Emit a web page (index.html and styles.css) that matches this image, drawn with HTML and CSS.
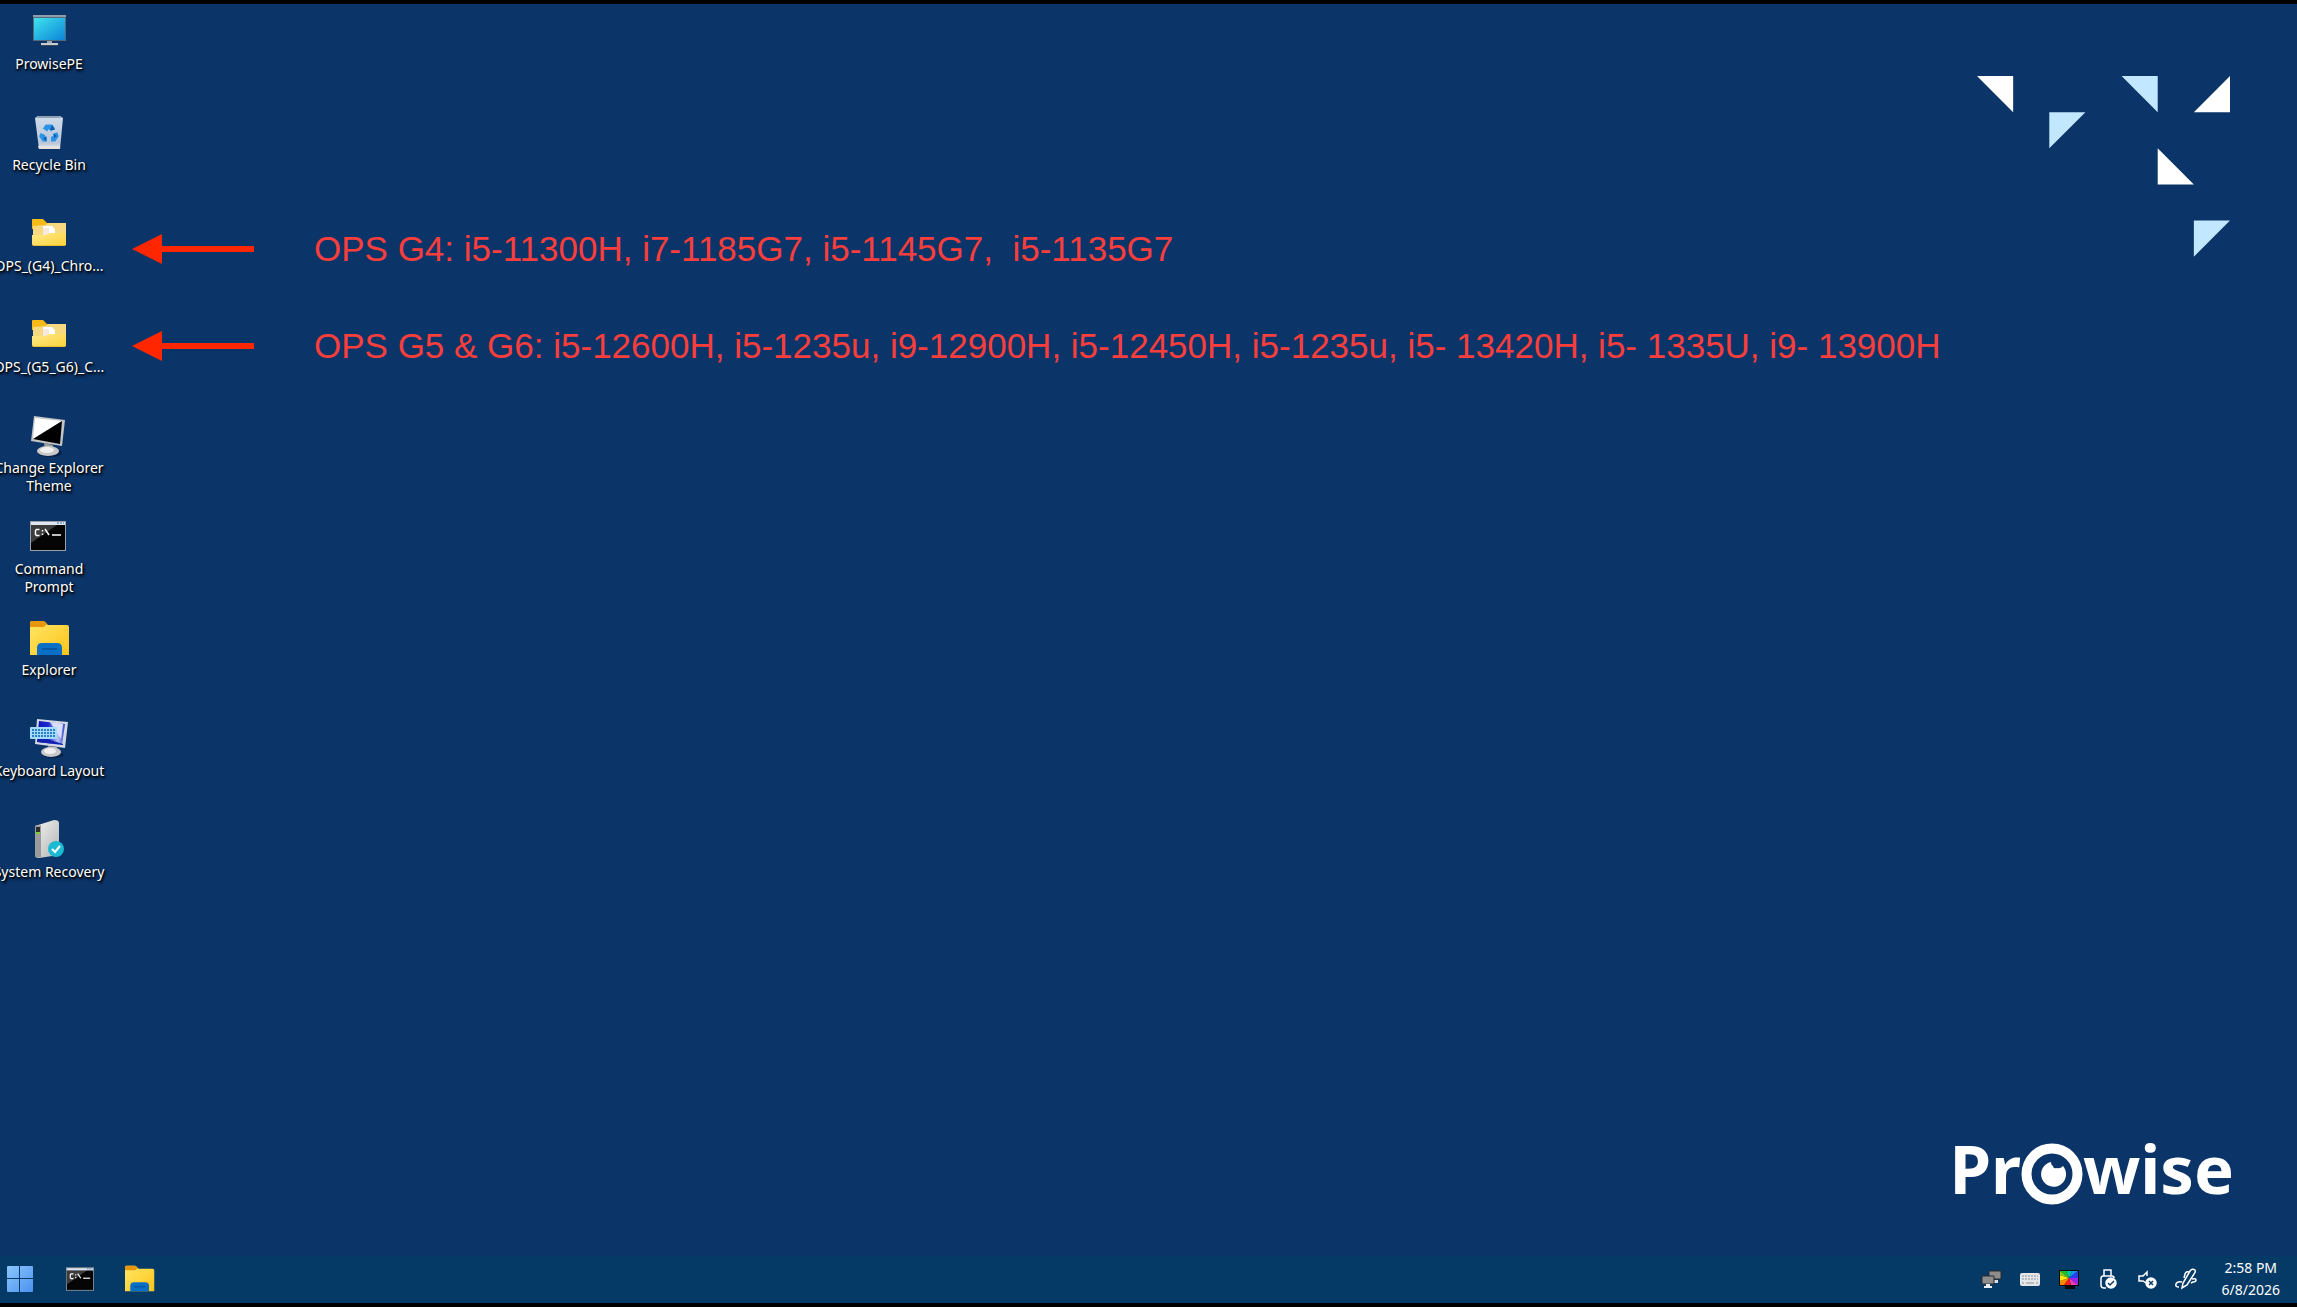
FILE: index.html
```html
<!DOCTYPE html>
<html lang="en">
<head>
    <meta charset="UTF-8">
    <meta name="viewport" content="width=device-width, initial-scale=1.0">
    <title>ProwisePE</title>
    <link rel="stylesheet" href="styles.css">
</head>
<body>
    <!-- shared gradients and icons -->
    <svg class="defs" width="0" height="0" aria-hidden="true">
        <defs>
            <linearGradient id="g-screen" x1="0" y1="0" x2="1" y2="1">
                <stop offset="0" stop-color="#3fe3ee"/>
                <stop offset="1" stop-color="#0b84d8"/>
            </linearGradient>
            <linearGradient id="g-bin" x1="0" y1="0" x2="0" y2="1">
                <stop offset="0" stop-color="#cfdcec"/>
                <stop offset=".8" stop-color="#b9c6d8"/>
                <stop offset="1" stop-color="#e2e4e6"/>
            </linearGradient>
            <linearGradient id="g-folder" x1="0" y1="0" x2="1" y2="1">
                <stop offset="0" stop-color="#ffe98a"/>
                <stop offset="1" stop-color="#fcd23a"/>
            </linearGradient>
            <linearGradient id="g-explorer" x1="0" y1="0" x2="1" y2="1">
                <stop offset="0" stop-color="#ffe768"/>
                <stop offset="1" stop-color="#fcc419"/>
            </linearGradient>
            <linearGradient id="g-start" x1="0" y1="0" x2="1" y2="1">
                <stop offset="0" stop-color="#8cc6fb"/>
                <stop offset="1" stop-color="#4a92f0"/>
            </linearGradient>
            <linearGradient id="g-blue" x1="0" y1="0" x2="1" y2="0">
                <stop offset="0" stop-color="#0a12b8"/>
                <stop offset=".4" stop-color="#1a2ad0"/>
                <stop offset=".75" stop-color="#b9c4f6"/>
                <stop offset="1" stop-color="#2a3cc8"/>
            </linearGradient>
            <linearGradient id="g-drive" x1="0" y1="0" x2="1" y2="1">
                <stop offset="0" stop-color="#f2f2f2"/>
                <stop offset="1" stop-color="#b4b4b4"/>
            </linearGradient>
            <symbol id="i-folder" viewBox="0 0 42 42">
                <path d="M4 6q0-1 1-1h10l4 4h18q1 0 1 1v5H4z" fill="#f9b916"/>
                <path d="M5 12l12-1 3-2h18v22H5z" fill="#f6d980"/>
                <path d="M15 12h9l3 3v9H15z" fill="#fff"/>
                <path d="M15 14h6v8h-6z" fill="#f7e8e0"/>
                <path d="M4 21h13l5-2h16v11q0 2-2 2H6q-2 0-2-2z" fill="url(#g-folder)"/>
                <path d="M5 31.500h32" stroke="#e9bd2d"/>
            </symbol>
            <symbol id="i-cmd" viewBox="0 0 36 30">
                <rect x=".5" y=".5" width="35" height="29" fill="#050505" stroke="#9aa0a6"/>
                <path d="M1 4h26L1 22z" fill="#3c3c3c"/>
                <path d="M1 1h34v3H1z" fill="#dfe8f2"/>
                <path d="M27 2h2m1 0h2m1 0h1" stroke="#3a66a8"/>
                <path d="M9.500 8.500H6.500L5.500 9.500v4l1 1h3M12.500 9v1.500m0 2V14M15 8l4 6" stroke="#fff" stroke-width="1.500" fill="none"/>
                <path d="M22 14h9" stroke="#fff" stroke-width="1.500"/>
            </symbol>
            <symbol id="i-explorer" viewBox="0 0 40 36">
                <path d="M0 3q0-2 2-2h11q1 0 2 1l3 3h19q2 0 2 2v28H0z" fill="url(#g-explorer)"/>
                <path d="M0 3q0-2 2-2h11q1 0 2 1l2 2-2 2q-1 1-2 1H0z" fill="#e8960c"/>
                <path d="M7 35V28q0-5 5-5h15q5 0 5 5v7z" fill="#0a6fc6"/>
                <path d="M12 29h15" stroke="#07509a" stroke-width="1.500"/>
            </symbol>
        </defs>
    </svg>

    <main class="desktop">
        <nav class="icons" aria-label="Desktop">
            <a href="#" class="icon">
                <svg viewBox="0 0 42 42">
                    <rect x="5" y="3" width="33" height="26" fill="#55697a"/>
                    <path d="M5 4h33" stroke="#c9d2d8"/>
                    <rect x="6" y="6" width="31" height="22" fill="url(#g-screen)"/>
                    <path d="M19 29h5v3h-5z" fill="#9aa7b2"/>
                    <path d="M13 31h17v2H13z" fill="#c5ccd2"/>
                    <path d="M13 33h17v1H13z" fill="#3b4650"/>
                </svg>
                <span class="label">ProwisePE</span>
            </a>
            <a href="#" class="icon">
                <svg viewBox="0 0 42 42">
                    <path d="M7 5l3-2h22l3 2-3 31H11z" fill="url(#g-bin)"/>
                    <path d="M8 5l3-2h20l3 2z" fill="#8fa0b4"/>
                    <path d="M10 33h22l-1 3H11z" fill="#e6e3df"/>
                    <g fill="none" stroke="#2a93e6" stroke-width="5">
                        <path d="M17 17l2-3h4l2 3"/>
                        <path d="M27 20l1 3-2 3h-3"/>
                        <path d="M19 26h-3l-2-3 1-2"/>
                    </g>
                    <path d="M24 12l3 5h-5zM18 24v4l-3-3zM26 21l3 2-3 2z" fill="#0d5cae"/>
                </svg>
                <span class="label">Recycle Bin</span>
            </a>
            <a href="#" class="icon">
                <svg><use href="#i-folder"/></svg>
                <span class="label">OPS_(G4)_Chro...</span>
            </a>
            <a href="#" class="icon">
                <svg><use href="#i-folder"/></svg>
                <span class="label">OPS_(G5_G6)_C...</span>
            </a>
            <a href="#" class="icon">
                <svg viewBox="0 0 42 42">
                    <ellipse cx="22" cy="37" rx="12" ry="4" fill="#07224a"/>
                    <path d="M16 27l9 2-1 5h-7z" fill="#9c9c9c"/>
                    <ellipse cx="20" cy="35" rx="11" ry="5" fill="#c9c9c9"/>
                    <ellipse cx="19" cy="34" rx="7" ry="3" fill="#f0f0f0"/>
                    <path d="M6 0l31 4-3 26L3 25z" fill="#c2c4c6"/>
                    <path d="M7 2l27 3L5 23z" fill="#fff"/>
                    <path d="M34 5L5 23l27 5z" fill="#000"/>
                </svg>
                <span class="label">Change Explorer Theme</span>
            </a>
            <a href="#" class="icon">
                <svg viewBox="0 0 42 42"><use href="#i-cmd" x="2" y="4" width="36" height="30"/></svg>
                <span class="label">Command Prompt</span>
            </a>
            <a href="#" class="icon">
                <svg viewBox="0 0 42 42"><use href="#i-explorer" x="2" y="2" width="40" height="36"/></svg>
                <span class="label">Explorer</span>
            </a>
            <a href="#" class="icon">
                <svg viewBox="0 0 42 42">
                    <ellipse cx="25" cy="36" rx="11" ry="3" fill="#07224a"/>
                    <path d="M20 27l9 1-1 6h-7z" fill="#9c9c9c"/>
                    <ellipse cx="23" cy="33" rx="10" ry="5" fill="#c9c9c9"/>
                    <ellipse cx="22" cy="32" rx="6" ry="3" fill="#f0f0f0"/>
                    <path d="M9 0l31 3-3 26L7 25z" fill="#d3d8e2"/>
                    <path d="M11 2l26 3-3 21L9 23z" fill="url(#g-blue)"/>
                    <path d="M12 18l23 7v1L10 23z" fill="#1420b0"/>
                    <path d="M22 3l13 2-2 15z" fill="#d9defa"/>
                    <rect x="2" y="8" width="27" height="12" rx="1" fill="#a6dcfb"/>
                    <path d="M4 11h23M4 14h23M4 17h23" stroke="#2b7fc4" stroke-width="2" stroke-dasharray="2 1"/>
                </svg>
                <span class="label">Keyboard Layout</span>
            </a>
            <a href="#" class="icon">
                <svg viewBox="0 0 42 42">
                    <path d="M7 6L26 0q5 0 5 3v32L11 38q-4 0-4-3z" fill="url(#g-drive)"/>
                    <path d="M7 6l6-1v32q-6 2-6-2z" fill="#9b9b9b"/>
                    <path d="M8 7h4v5H8z" fill="#2d2d2d"/>
                    <path d="M8 12h4v2H8z" fill="#78d22d"/>
                    <circle cx="28" cy="29" r="8" fill="#1cb9d2"/>
                    <path d="M24 29l3 3 5-6" stroke="#fff" stroke-width="2" fill="none"/>
                </svg>
                <span class="label">System Recovery</span>
            </a>
        </nav>

        <section class="notes">
            <p class="note">
                <svg class="arrow" viewBox="0 0 122 30"><path d="M0 15L30 0v12h92v6H30v12z"/></svg>
                <span>OPS G4: i5-11300H, i7-1185G7, i5-1145G7,  i5-1135G7</span>
            </p>
            <p class="note">
                <svg class="arrow" viewBox="0 0 122 30"><path d="M0 15L30 0v12h92v6H30v12z"/></svg>
                <span>OPS G5 &amp; G6: i5-12600H, i5-1235u, i9-12900H, i5-12450H, i5-1235u, i5- 13420H, i5- 1335U, i9- 13900H</span>
            </p>
        </section>

        <!-- wallpaper artwork -->
        <svg class="triangles" viewBox="0 0 7 5" aria-hidden="true">
            <path class="white" d="M0 0h1v1zM6 1h1V0zM5 2v1h1z"/>
            <path class="pale" d="M4 0h1v1zM2 1h1L2 2zM6 4h1L6 5z"/>
        </svg>
        <div class="brand">
            <span>Pr</span>
            <svg class="eye" viewBox="0 0 62 62" aria-label="o">
                <circle cx="31" cy="31" r="25.500" fill="none" stroke="#fff" stroke-width="10"/>
                <path d="M30 19q0 3 2 4 0 3 4 2 3 1 6-2a12.500 12.500 0 1 1-12-4z" fill="#fff"/>
            </svg>
            <span>wise</span>
        </div>
    </main>

    <footer class="taskbar">
        <div class="pinned">
            <button type="button" aria-label="Start">
                <svg viewBox="0 0 26 26" width="26" height="26"><path d="M0 1q0-1 1-1h11v12H0zM13 0h12q1 0 1 1v11H13zM0 13h12v13H1q-1 0-1-1zM13 13h13v12q0 1-1 1H13z" fill="url(#g-start)"/></svg>
            </button>
            <button type="button" aria-label="Command Prompt">
                <svg width="28" height="24"><use href="#i-cmd"/></svg>
            </button>
            <button type="button" aria-label="Explorer">
                <svg width="30" height="27"><use href="#i-explorer"/></svg>
            </button>
        </div>
        <div class="tray">
            <button type="button" aria-label="Network">
                <svg viewBox="0 0 22 22">
                    <path d="M9 3h12v8H9z" fill="#8d8d8d" stroke="#2b2b2b"/>
                    <path d="M14 12h4v3h-4z" fill="#ddd"/>
                    <path d="M2 8h12v8H2z" fill="#8d8d8d" stroke="#2b2b2b"/>
                    <path d="M6 16h4v2h2v2H4v-2h2z" fill="#eee"/>
                </svg>
            </button>
            <button type="button" aria-label="Keyboard">
                <svg viewBox="0 0 22 22">
                    <rect x="1" y="5" width="20" height="13" rx="2" fill="#e4e6e8"/>
                    <path d="M3 8h16M3 11h16" stroke="#8a9299" stroke-dasharray="2 1"/>
                    <path d="M3 15h2m2 0h8m2 0h2" stroke="#8a9299"/>
                </svg>
            </button>
            <button type="button" aria-label="Display">
                <svg viewBox="0 0 22 22">
                    <path d="M1 2h20v16h-4v3H7v-3H1z" fill="#0a0a0a"/>
                    <path d="M11 10L2 3h6z" fill="#1fc21f"/>
                    <path d="M11 10L8 3h6z" fill="#00c8a0"/>
                    <path d="M11 10l3-7h6z" fill="#1796f0"/>
                    <path d="M11 10l9-7v7z" fill="#2440f0"/>
                    <path d="M11 10h9v7z" fill="#9a25e8"/>
                    <path d="M11 10l9 7h-7z" fill="#f03cc0"/>
                    <path d="M11 10l2 7H6z" fill="#f02020"/>
                    <path d="M11 10l-5 7H2v-4z" fill="#ff8a00"/>
                    <path d="M11 10l-9 3V7z" fill="#fbe910"/>
                    <path d="M11 10L2 7V3z" fill="#7ed321"/>
                </svg>
            </button>
            <button type="button" aria-label="Safely remove hardware">
                <svg viewBox="0 0 22 22" fill="none" stroke="#fff" stroke-width="1.500">
                    <path d="M9 20H7q-3 0-3-3v-6q0-3 2-3h9q2 0 2 2M7 8V2h7v6"/>
                    <circle cx="14" cy="15" r="5" fill="#fff"/>
                    <path d="M11 15l2 2 4-4" stroke="#0b3c66"/>
                </svg>
            </button>
            <button type="button" aria-label="Volume muted">
                <svg viewBox="0 0 22 22" fill="none" stroke="#fff" stroke-width="1.500">
                    <path d="M10 15l-3-2H3V8h4l4-4v4"/>
                    <circle cx="15" cy="15" r="5" fill="#fff"/>
                    <path d="M13 13l4 4m0-4l-4 4" stroke="#0b3c66"/>
                </svg>
            </button>
            <button type="button" aria-label="Pen">
                <svg viewBox="0 0 22 22" fill="none" stroke="#fff" stroke-width="1.500">
                    <path d="M7 20l1-5 7-12q2-3 5-1 1 2-1 4l-7 11z"/>
                    <path d="M14 4q-3-1-4 2l-1 4M7 14q-5-1-6 2-1 3 3 3M17 11q4-1 4 1t-3 2l-2 1"/>
                </svg>
            </button>
            <time class="clock" datetime="2026-06-08T14:58">
                <span>2:58 PM</span>
                <span>6/8/2026</span>
            </time>
        </div>
    </footer>
</body>
</html>
```
FILE: styles.css
```css
:root {
    --wallpaper: #0b3468;
    --taskbar: #043a65;
    --note-red: #ff2600;
    --font-ui: "Noto Sans", "Open Sans", sans-serif;
}

* {
    box-sizing: border-box;
}

body {
    margin: 0;
    height: 100vh;
    display: flex;
    flex-direction: column;
    border-top: 4px solid #000;
    border-bottom: 4px solid #000;
    background: var(--wallpaper);
    color: #fff;
    font-family: var(--font-ui);
    font-size: 14px;
    overflow: hidden;
}

.defs {
    position: absolute;
}

/* --- Desktop --- */
.desktop {
    position: relative;
    flex: 1;
    min-height: 0;
    display: flex;
    align-items: flex-start;
}

.icons {
    display: flex;
    flex-direction: column;
    width: 114px;
    margin-left: -8px;
    padding-top: 8px;
}

.icon {
    height: 101px;
    display: flex;
    flex-direction: column;
    align-items: center;
    gap: 1px;
    color: #fff;
    text-decoration: none;
}

.icon svg {
    width: 42px;
    height: 42px;
    flex: none;
}

.label {
    line-height: 18px;
    text-align: center;
    text-shadow: 1px 1px 2px #000, 1px 2px 3px #000;
}

/* --- Red annotations --- */
.notes {
    display: flex;
    flex-direction: column;
    gap: 57px;
    padding: 225px 0 0 26px;
}

.note {
    display: flex;
    align-items: center;
    gap: 60px;
    margin: 0;
    color: #f93e3c;
    font-family: "Liberation Sans", Arial, sans-serif;
    font-size: 35px;
    line-height: 40px;
    white-space: pre;
}

.arrow {
    width: 122px;
    height: 30px;
    fill: var(--note-red);
}

/* --- Wallpaper --- */
.triangles {
    position: absolute;
    top: 72px;
    right: 67px;
    width: 253px;
}

.triangles .white {
    fill: #fff;
}

.triangles .pale {
    fill: #c2e8ff;
}

.brand {
    position: absolute;
    right: 63px;
    bottom: 51px;
    display: flex;
    align-items: center;
    font-size: 67px;
    font-weight: 700;
    line-height: 72px;
}

.eye {
    width: 62px;
    height: 62px;
    margin-top: 12px;
}

/* --- Taskbar --- */
.taskbar {
    display: flex;
    justify-content: space-between;
    height: 47px;
    padding-bottom: 2px;
    background: var(--taskbar);
}

.taskbar button {
    display: flex;
    align-items: center;
    justify-content: center;
    padding: 0;
    border: 0;
    background: none;
}

.pinned {
    display: flex;
    margin-left: -10px;
}

.pinned button {
    width: 60px;
}

.tray {
    display: flex;
    padding-right: 17px;
}

.tray button {
    width: 39px;
}

.tray svg {
    width: 22px;
    height: 22px;
}

.clock {
    display: flex;
    flex-direction: column;
    justify-content: center;
    margin-left: 16px;
    line-height: 22px;
    text-align: center;
}
```
